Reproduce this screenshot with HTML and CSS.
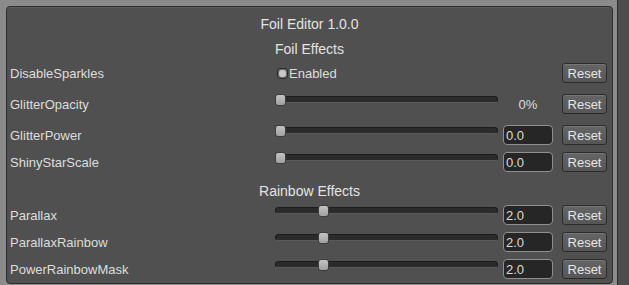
FILE: index.html
```html
<!DOCTYPE html>
<html lang="en">
<head>
    <meta charset="UTF-8">
    <title>Foil Editor</title>
    <link rel="stylesheet" href="styles.css">
</head>
<body>
    <div class="window">
        <div class="inspector">
            <div class="panel">
                <div class="title">Foil Editor 1.0.0</div>

                <div class="section">Foil Effects</div>

                <div class="prop prop-first">
                    <span class="prop-label">DisableSparkles</span>
                    <div class="prop-control">
                        <label class="toggle"><span class="toggle-box"></span>Enabled</label>
                    </div>
                    <button class="reset">Reset</button>
                </div>

                <div class="prop prop-loose">
                    <span class="prop-label">GlitterOpacity</span>
                    <div class="slider"><span class="thumb" style="left: 0px"></span></div>
                    <span class="value-text">0%</span>
                    <button class="reset">Reset</button>
                </div>

                <div class="prop prop-loose">
                    <span class="prop-label">GlitterPower</span>
                    <div class="slider"><span class="thumb" style="left: 0px"></span></div>
                    <input class="field" value="0.0">
                    <button class="reset">Reset</button>
                </div>

                <div class="prop">
                    <span class="prop-label">ShinyStarScale</span>
                    <div class="slider"><span class="thumb" style="left: 0px"></span></div>
                    <input class="field" value="0.0">
                    <button class="reset">Reset</button>
                </div>

                <div class="section section-spaced">Rainbow Effects</div>

                <div class="prop prop-first">
                    <span class="prop-label">Parallax</span>
                    <div class="slider"><span class="thumb" style="left: 43px"></span></div>
                    <input class="field" value="2.0">
                    <button class="reset">Reset</button>
                </div>

                <div class="prop">
                    <span class="prop-label">ParallaxRainbow</span>
                    <div class="slider"><span class="thumb" style="left: 43px"></span></div>
                    <input class="field" value="2.0">
                    <button class="reset">Reset</button>
                </div>

                <div class="prop">
                    <span class="prop-label">PowerRainbowMask</span>
                    <div class="slider"><span class="thumb" style="left: 43px"></span></div>
                    <input class="field" value="2.0">
                    <button class="reset">Reset</button>
                </div>
            </div>
        </div>
        <div class="scrollbar"></div>
    </div>
</body>
</html>
```

FILE: styles.css
```css
/* editor window */
body {
  margin: 0;
  background: #8b8b8b;
  font-family: 'Liberation Sans', Arial, sans-serif;
  font-size: 13px;
  color: #dedede;
}

.window {
  display: flex;
  height: 285px;
  overflow: hidden;
}

.inspector {
  padding: 6px 0 0 6px;
}

.scrollbar {
  flex: 1;
  margin-left: 4px;
  background: #4d4d4d;
  border-left: 1px solid #2c2c2c;
}

.panel {
  width: 605px;
  padding: 7px 0 4px 0;
  background: #505050;
  border: 1px solid #2e2e2e;
  border-radius: 4px;
  box-shadow: inset 0 1px 0 #5c5c5c;
}

/* headings */
.title,
.section {
  box-sizing: border-box;
  height: 20px;
  padding-top: 1px;
  line-height: 20px;
  text-align: center;
  font-size: 14px;
  color: #e4e4e4;
}

.title {
  padding-top: 0;
}

.section {
  margin-top: 4px;
}

.section-spaced {
  margin-top: 8px;
}

/* property rows */
.prop {
  display: flex;
  align-items: center;
  height: 20px;
  margin-top: 7px;
  padding-left: 3px;
}

.prop-first {
  margin-top: 5px;
}

.prop-loose {
  margin-top: 11px;
}

.prop-label {
  box-sizing: border-box;
  width: 265px;
  height: 20px;
  padding-top: 1px;
  line-height: 20px;
  white-space: nowrap;
}

.prop-control {
  width: 278px;
  display: flex;
  align-items: center;
}

/* toggle */
.toggle {
  display: flex;
  align-items: center;
  margin-left: 2px;
  padding-top: 1px;
}

.toggle-box {
  position: relative;
  width: 9px;
  height: 9px;
  margin-right: 1px;
  background: #6a6a6a;
  border: 1px solid #2a2a2a;
  border-radius: 3px;
}

.toggle-box::after {
  content: '';
  position: absolute;
  top: 1px;
  left: 1px;
  width: 7px;
  height: 7px;
  border-radius: 3px;
  background: #c8c8c8;
}

/* slider */
.slider {
  position: relative;
  align-self: flex-start;
  width: 223px;
  height: 12px;
  margin-right: 5px;
}

.slider::before {
  content: '';
  position: absolute;
  left: 0;
  right: 0;
  top: 2px;
  height: 5px;
  background: #2b2b2b;
  border: 1px solid #1c1c1c;
  border-bottom-color: #5a5a5a;
  border-radius: 4px;
}

.thumb {
  position: absolute;
  top: 0;
  width: 9px;
  height: 10px;
  background: linear-gradient(#c4c4c4, #a0a0a0);
  border: 1px solid #3c3c3c;
  border-radius: 3px;
}

.value-text {
  width: 50px;
  text-align: center;
  line-height: 20px;
  padding-top: 1px;
}

/* number field */
.field {
  box-sizing: border-box;
  width: 50px;
  height: 20px;
  margin: 0;
  padding: 1px 0 0 2px;
  background: #262626;
  border: 1px solid #8f8f8f;
  border-radius: 4px;
  color: #dcdcdc;
  font-family: inherit;
  font-size: 13px;
  outline: none;
}

/* buttons */
.reset {
  box-sizing: border-box;
  width: 45px;
  height: 20px;
  margin: 0 0 0 9px;
  padding: 1px 0 0;
  background: linear-gradient(#656565, #565656);
  border: 1px solid #2b2b2b;
  border-radius: 3px;
  box-shadow: inset 0 1px 0 #777;
  color: #e6e6e6;
  font-family: inherit;
  font-size: 13px;
  line-height: 18px;
}
```
